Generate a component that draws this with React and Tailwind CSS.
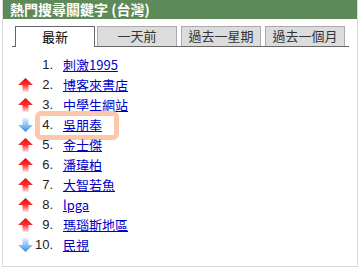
import React from "react";

const items = [
  { n: "1.", t: "刺激1995", a: null },
  { n: "2.", t: "博客來書店", a: "up" },
  { n: "3.", t: "中學生網站", a: "up" },
  { n: "4.", t: "吳朋奉", a: "down", hl: true },
  { n: "5.", t: "金士傑", a: "up" },
  { n: "6.", t: "潘瑋柏", a: "up" },
  { n: "7.", t: "大智若魚", a: "up" },
  { n: "8.", t: "lpga", a: "up" },
  { n: "9.", t: "瑪瑙斯地區", a: "up" },
  { n: "10.", t: "民視", a: "down" },
];

function Up() {
  return (
    <svg width="15" height="14" viewBox="0 0 15 14">
      <defs>
        <linearGradient id="gu" x1="0" y1="0" x2="0" y2="1">
          <stop offset="0" stopColor="#ff0000" />
          <stop offset="0.5" stopColor="#ff3030" />
          <stop offset="1" stopColor="#ffe8e8" />
        </linearGradient>
      </defs>
      <polygon points="7.5,0 15,7 10.5,7 10.5,14 4.5,14 4.5,7 0,7" fill="url(#gu)" />
    </svg>
  );
}

function Down() {
  return (
    <svg width="15" height="14" viewBox="0 0 15 14">
      <defs>
        <linearGradient id="gd" x1="0" y1="0" x2="0" y2="1">
          <stop offset="0" stopColor="#e4f1ff" />
          <stop offset="0.5" stopColor="#8cc0f5" />
          <stop offset="1" stopColor="#3a88e6" />
        </linearGradient>
      </defs>
      <polygon points="4.5,0 10.5,0 10.5,7 15,7 7.5,14 0,7 4.5,7" fill="url(#gd)" />
    </svg>
  );
}

const cjk = { fontFamily: '"Noto Sans CJK TC", "Liberation Sans", sans-serif' };

export default function App() {
  return (
    <div className="w-[361px] h-[273px] bg-white" style={cjk}>
      <div className="ml-[2px] w-[356px] h-[267px] border-x border-b border-[#d9d9d9] flex flex-col">
        <div className="h-[19px] bg-[#5e8a59] text-white font-bold text-[14px] leading-[19px] pl-[7px]">
          熱門搜尋關鍵字 (台灣)
        </div>
        <div className="mt-[8px] ml-[9px] w-[337px] h-[20px] border-b border-[#666] flex items-end">
          <div className="ml-[3px] w-[80px] h-[21px] mb-[-1px] bg-white border-t border-x border-[#666] text-center text-[13px] leading-[19px] text-black">
            最新
          </div>
          <div className="ml-[2px] w-[80px] h-[20px] bg-[#dcdcdc] border-t border-x border-[#aaa] text-center text-[13px] leading-[18px] text-[#333]">
            一天前
          </div>
          <div className="ml-[4px] w-[80px] h-[20px] bg-[#dcdcdc] border-t border-x border-[#aaa] text-center text-[13px] leading-[18px] text-[#333]">
            過去一星期
          </div>
          <div className="ml-[4px] w-[80px] h-[20px] bg-[#dcdcdc] border-t border-x border-[#aaa] text-center text-[13px] leading-[18px] text-[#333]">
            過去一個月
          </div>
        </div>
        <div className="mt-[8px] flex flex-col">
          {items.map((it) => (
            <div key={it.n} className="h-[20px] flex items-center">
              <div className="w-[15px] h-[14px] ml-[15px]">
                {it.a === "up" ? <Up /> : it.a === "down" ? <Down /> : null}
              </div>
              <div className="relative flex items-center">
                {it.hl && (
                  <div className="absolute left-[2px] top-[-4px] w-[84px] h-[29px] border-[5px] border-[#fcc7aa] rounded-[6px] pointer-events-none" />
                )}
                <span
                  className="w-[20px] text-right text-[13px] text-[#222]"
                  style={{ fontFamily: '"Liberation Sans", Arial, sans-serif' }}
                >
                  {it.n}
                </span>
                <a
                  href="#"
                  className="ml-[10px] text-[13px] text-[#0000cc] underline leading-[18px]"
                >
                  {it.t}
                </a>
              </div>
            </div>
          ))}
        </div>
      </div>
    </div>
  );
}
